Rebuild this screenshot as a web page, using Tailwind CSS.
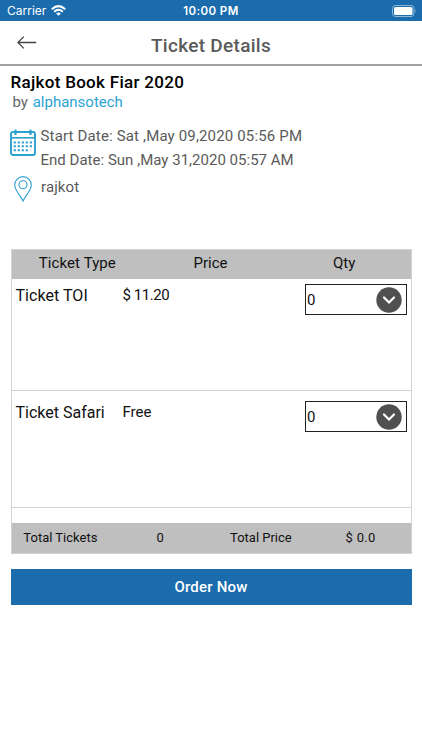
<!DOCTYPE html>
<html lang="en">
<head>
<meta charset="utf-8">
<title>Ticket Details</title>
<script src="https://cdn.jsdelivr.net/npm/@tailwindcss/browser@4"></script>
</head>
<body class="w-[422px] h-[750px] overflow-hidden bg-white font-['Roboto',sans-serif] text-[#111] whitespace-nowrap">
<header>
  <div class="h-[21px] bg-[#1a6cac] text-white grid grid-cols-3 items-center font-['Inter',sans-serif]">
    <div class="flex items-center gap-[5px] pl-[7px]">
      <span class="text-[12px] leading-[20px]">Carrier</span>
      <svg class="w-[15px] h-[11px]" viewBox="0 0 15 11" fill="none" stroke="#fff" stroke-width="2"><path d="M.8 4.2Q7.5-2 14.2 4.2M3.2 6.7Q7.5 2.9 11.8 6.7"/><path d="M5.2 8.5Q7.5 6.6 9.8 8.5L7.5 10.8Z" fill="#fff" stroke="none"/></svg>
    </div>
    <span class="text-center text-[11.5px] leading-[20px] pt-px font-semibold tracking-[0.4px]">10:00 PM</span>
    <svg class="w-[25px] h-[12px] justify-self-end mr-[5px]" viewBox="0 0 25 12" fill="none"><rect x=".5" y=".5" width="21.5" height="11" rx="3" stroke="#8db8da"/><rect x="2" y="2" width="18.500" height="8" rx="1.500" fill="#fff"/><path d="M23.500 4.200Q25 6 23.500 7.800Z" fill="#8db8da"/></svg>
  </div>
  <div class="h-[45px] border-b-2 border-[#a0a0a0] grid grid-cols-[1fr_auto_1fr] items-center">
    <svg class="w-[20px] h-[13px] ml-[17px]" viewBox="0 0 20 13" fill="none" stroke="#444" stroke-width="1.300"><path d="M19.200 6.500H.8M6.800.6L.8 6.500l6 5.900"/></svg>
    <h1 class="text-[19px] leading-[24px] font-medium tracking-[0.3px] text-[#5a5a5a] pt-[6px]">Ticket Details</h1>
  </div>
</header>
<main class="px-[10.500px] pt-[5px]">
  <section class="h-[178px]">
    <h2 class="text-[17px] leading-[22px] font-medium tracking-[0.3px] text-black">Rajkot Book Fiar 2020</h2>
    <p class="text-[15px] leading-[18px] text-[#666] pl-[2px]">by <span class="text-[#2ba3d4] ml-[1px]">alphansotech</span></p>
    <div class="flex gap-[4.500px] pt-[13px] text-[15px] leading-[24px] text-[#5a5a5a]">
      <svg class="w-[26px] h-[27px] mt-[5px] -ml-[0.500px]" viewBox="0 0 26 27" fill="none" stroke="#2ca0cf"><rect x="1" y="3" width="24" height="23" rx="2" stroke-width="1.900"/><path d="M1 8.800H25" stroke-width="1.600"/><path d="M5.500 .8V6M20.500 .8V6" stroke-width="2.200"/><path d="M3.700 13.400H22.300M3.700 17.300H22.300M3.700 21.300H18" stroke-width="2" stroke-dasharray="2.200 1.800"/></svg>
      <div><p class="tracking-[0.16px]">Start Date: Sat ,May 09,2020 05:56 PM</p><p class="tracking-[0.02px]">End Date: Sun ,May 31,2020 05:57 AM</p></div>
    </div>
    <div class="flex items-center gap-[9px] pl-[3.500px] pt-[3px] text-[15px] leading-[24px] text-[#5a5a5a]">
      <svg class="w-[18px] h-[26px]" viewBox="0 0 18 26" fill="none" stroke="#2ca0cf" stroke-width="1.100"><path d="M9 25C7 20 .7 14.500.7 8.900a8.300 8.300 0 0 1 16.600 0C17.300 14.500 11 20 9 25Z"/><circle cx="9" cy="8.700" r="4"/></svg>
      <span class="pb-[3px] tracking-[0.1px]">rajkot</span>
    </div>
  </section>
  <section class="border border-[#d2d2d2] h-[305px] flex flex-col">
    <div class="h-[29px] shrink-0 bg-[#bfbfbf] flex text-[15px] leading-[26px]">
      <span class="w-[132px] text-center tracking-[0.1px]">Ticket Type</span><span class="w-[135px] text-center">Price</span><span class="w-[133px] text-center">Qty</span>
    </div>
    <div class="h-[112px] shrink-0 border-b border-[#d2d2d2] flex">
      <span class="w-[107px] pl-[4px] pt-[5px] text-[16px] leading-[24px] tracking-[0.05px]">Ticket TOI</span>
      <span class="pl-[4px] pt-[4px] text-[15px] leading-[24px] tracking-[-0.45px]">$ 11.20</span>
      <div class="ml-auto mr-[4px] mt-[5px] w-[102px] h-[31px] border-[1.500px] border-[#222] flex items-center justify-between pl-[1.500px] pr-[3.500px] text-[15px]"><span class="pt-px">0</span><svg class="w-[26px] h-[26px]" viewBox="0 0 26 26" fill="none"><circle cx="13" cy="13" r="12.700" fill="#505050"/><path d="M8 10.500l5 5 5-5" stroke="#fff" stroke-width="2.200" stroke-linecap="round"/></svg></div>
    </div>
    <div class="h-[117px] shrink-0 border-b border-[#d2d2d2] flex">
      <span class="w-[107px] pl-[4px] pt-[10px] text-[16px] leading-[24px]">Ticket Safari</span>
      <span class="pl-[4px] pt-[9px] text-[15px] leading-[24px]">Free</span>
      <div class="ml-auto mr-[4px] mt-[10px] w-[102px] h-[31px] border-[1.500px] border-[#222] flex items-center justify-between pl-[1.500px] pr-[3.500px] text-[15px]"><span class="pt-px">0</span><svg class="w-[26px] h-[26px]" viewBox="0 0 26 26" fill="none"><circle cx="13" cy="13" r="12.700" fill="#505050"/><path d="M8 10.500l5 5 5-5" stroke="#fff" stroke-width="2.200" stroke-linecap="round"/></svg></div>
    </div>
    <div class="mt-auto h-[30px] bg-[#bfbfbf] flex text-[13px] leading-[30px]">
      <span class="w-[98px] text-center">Total Tickets</span><span class="w-[102px] text-center">0</span><span class="w-[100px] text-center">Total Price</span><span class="w-[100px] text-center tracking-[0.35px]">$ 0.0</span>
    </div>
  </section>
  <button class="mt-[15px] block w-full h-[36px] bg-[#1a6cac] text-white text-[15px] leading-[34px] font-medium tracking-[0.2px]">Order Now</button>
</main>
</body>
</html>
